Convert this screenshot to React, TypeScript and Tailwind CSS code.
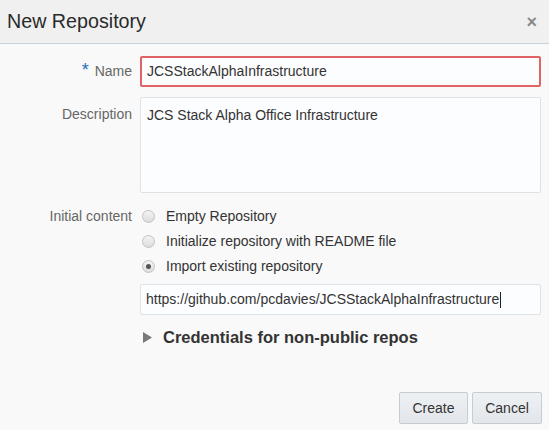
import React from "react";

const font = { fontFamily: '"Liberation Sans", Arial, sans-serif' };

function Radio({ checked }: { checked?: boolean }) {
  return (
    <span className="relative inline-flex h-[13px] w-[13px] shrink-0 items-center justify-center rounded-full border border-[#c2c2c2] bg-gradient-to-b from-[#f4f4f4] to-[#dcdcdc]">
      {checked && <span className="h-[5px] w-[5px] rounded-full bg-[#555]" />}
    </span>
  );
}

export default function App() {
  return (
    <div className="h-[430px] w-[549px] overflow-hidden bg-[#f9f9f9] text-[#333]" style={font}>
      <div className="flex h-[44px] items-center justify-between border-b border-[#c9d2da] bg-[#f0f0f0] pl-[7px] pr-[12px]">
        <div className="text-[19.7px] leading-none text-[#2a2a2a]">New Repository</div>
        <div className="text-[18px] font-bold leading-none text-[#8a8a8a]">×</div>
      </div>
      <div className="flex flex-col pt-[12px]">
        <div className="flex items-center">
          <div className="flex w-[132px] items-center justify-end gap-[6px] text-[14px] text-[#666]">
            <span className="text-[18px] leading-none text-[#1f6fbf] -mt-[4px]">*</span>
            <span>Name</span>
          </div>
          <div className="ml-[8px] flex h-[31px] w-[401px] items-center rounded-[2px] border-2 border-[#e06464] bg-[#fcfdfe] px-[5px] text-[14px] text-[#333]">
            JCSStackAlphaInfrastructure
          </div>
        </div>
        <div className="mt-[10px] flex items-start">
          <div className="w-[132px] pt-[7px] text-right text-[14px] text-[#666]">Description</div>
          <div className="ml-[8px] h-[96px] w-[401px] rounded-[2px] border border-[#dde2e6] bg-[#fcfdfe] px-[6px] pt-[7px] text-[14px] text-[#333]">
            JCS Stack Alpha Office Infrastructure
          </div>
        </div>
        <div className="mt-[11px] flex items-start">
          <div className="w-[132px] pt-[2px] text-right text-[14px] text-[#666]">Initial content</div>
          <div className="ml-[8px] flex w-[401px] flex-col">
            <div className="flex h-[25px] items-center gap-[11px] pl-[2px] text-[14px] text-[#333]">
              <Radio />
              <span>Empty Repository</span>
            </div>
            <div className="flex h-[25px] items-center gap-[11px] pl-[2px] text-[14px] text-[#333]">
              <Radio />
              <span>Initialize repository with README file</span>
            </div>
            <div className="flex h-[25px] items-center gap-[11px] pl-[2px] text-[14px] text-[#333]">
              <Radio checked />
              <span>Import existing repository</span>
            </div>
            <div className="mt-[5px] flex h-[31px] items-center rounded-[2px] border border-[#dde2e6] bg-[#fcfdfe] px-[5px] text-[14px] text-[#333]">
              <span>https://github.com/pcdavies/JCSStackAlphaInfrastructure</span>
              <span className="ml-[1px] h-[16px] w-px bg-[#222]" />
            </div>
            <div className="mt-[10px] flex h-[24px] items-center gap-[11px] pl-[3px]">
              <svg width="9" height="11" viewBox="0 0 9 11">
                <path d="M0 0 L9 5.5 L0 11 Z" fill="#7a7a7a" />
              </svg>
              <span className="text-[16.5px] font-bold text-[#333]">Credentials for non-public repos</span>
            </div>
          </div>
        </div>
        <div className="mt-[43px] flex justify-end gap-[4px] pr-[7px]">
          <button className="h-[32px] w-[69px] rounded-[2px] border border-[#c5ccd3] bg-gradient-to-b from-[#eef1f4] to-[#e2e6ea] text-[14px] text-[#333]">
            Create
          </button>
          <button className="h-[32px] w-[70px] rounded-[2px] border border-[#c5ccd3] bg-gradient-to-b from-[#eef1f4] to-[#e2e6ea] text-[14px] text-[#333]">
            Cancel
          </button>
        </div>
      </div>
    </div>
  );
}
